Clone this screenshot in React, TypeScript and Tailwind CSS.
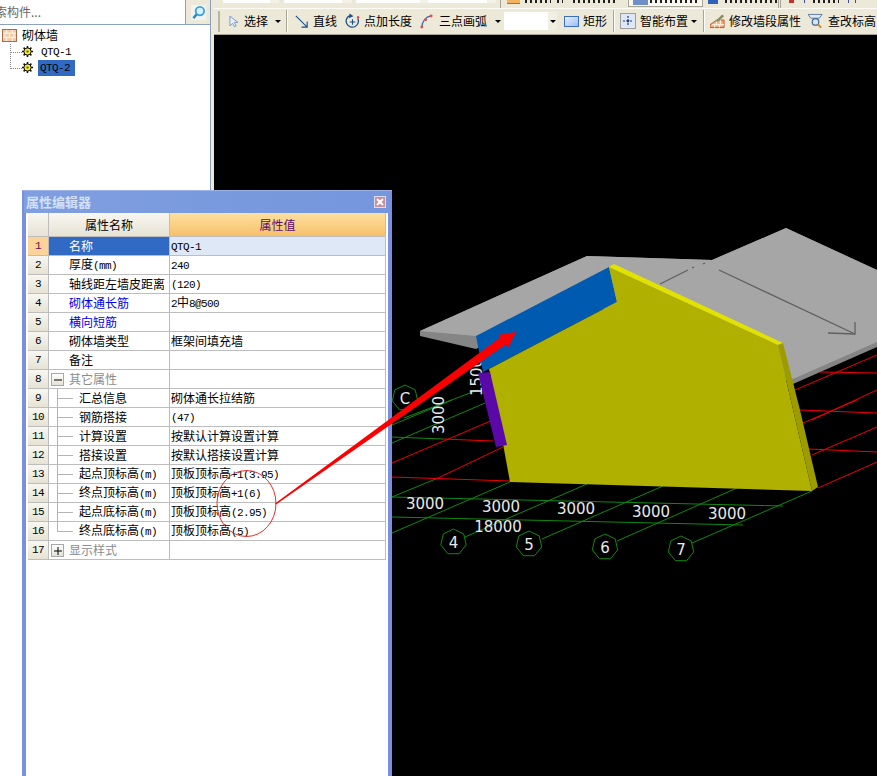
import { Fragment } from "react";

const cjk = '"Noto Sans CJK SC", sans-serif';

type Row = {
  no: number;
  name: string;
  value?: string;
  tone?: "blue" | "gray";
  indent?: boolean;
  toggle?: "-" | "+";
  last?: boolean;
};

const rows: Row[] = [
  { no: 1, name: "名称", value: "QTQ-1" },
  { no: 2, name: "厚度(mm)", value: "240" },
  { no: 3, name: "轴线距左墙皮距离", value: "(120)" },
  { no: 4, name: "砌体通长筋", value: "2中8@500", tone: "blue" },
  { no: 5, name: "横向短筋", tone: "blue" },
  { no: 6, name: "砌体墙类型", value: "框架间填充墙" },
  { no: 7, name: "备注" },
  { no: 8, name: "其它属性", tone: "gray", toggle: "-" },
  { no: 9, name: "汇总信息", value: "砌体通长拉结筋", indent: true },
  { no: 10, name: "钢筋搭接", value: "(47)", indent: true },
  { no: 11, name: "计算设置", value: "按默认计算设置计算", indent: true },
  { no: 12, name: "搭接设置", value: "按默认搭接设置计算", indent: true },
  { no: 13, name: "起点顶标高(m)", value: "顶板顶标高+1(3.95)", indent: true },
  { no: 14, name: "终点顶标高(m)", value: "顶板顶标高+1(6)", indent: true },
  { no: 15, name: "起点底标高(m)", value: "顶板顶标高(2.95)", indent: true },
  { no: 16, name: "终点底标高(m)", value: "顶板顶标高(5)", indent: true, last: true },
  { no: 17, name: "显示样式", tone: "gray", toggle: "+" },
];

// SimSun-like mix: latin runs are half width, han runs are 12px
function Mixed({ text }: { text: string }) {
  const parts = text.split(/([\u4e00-\u9fff]+)/).filter(Boolean);
  return (
    <span>
      {parts.map((p, i) =>
        /[\u4e00-\u9fff]/.test(p) ? (
          <span key={i} className="text-[12px] font-['Noto_Sans_CJK_SC']">
            {p}
          </span>
        ) : (
          <span key={i} className="text-[11px] tracking-[-0.6px] whitespace-pre font-['Liberation_Mono']">
            {p}
          </span>
        )
      )}
    </span>
  );
}

function BrickIcon({ className }: { className?: string }) {
  return (
    <svg viewBox="0 0 16 14" className={className}>
      <rect x="0.5" y="0.5" width="15" height="13" fill="#f6c9a4" stroke="#a9603a" />
      <path d="M1 4.5H15M1 9H15M5 1V4.5M11 1V4.5M3 4.5V9M8 4.5V9M13 4.5V9M5 9V13M11 9V13" stroke="#fff" fill="none" />
    </svg>
  );
}

function GearIcon() {
  return (
    <svg viewBox="0 0 11 11" className="w-[11px] h-[11px] shrink-0 -translate-y-[1px]">
      <path d="M5.5 0V11M0 5.5H11M1.6 1.6L9.4 9.4M9.4 1.6L1.6 9.4" stroke="#111" strokeWidth="1.6" />
      <circle cx="5.5" cy="5.5" r="3.6" fill="#f4ee20" stroke="#111" />
      <circle cx="5.5" cy="5.5" r="1.1" fill="#444" />
    </svg>
  );
}

function LeftPanel() {
  return (
    <div className="w-[211px] shrink-0 bg-white border-r border-[#8aa2bb] h-[776px] flex flex-col">
      <div className="h-[25px] flex border-b border-[#8aa2bb] bg-[#ece9d8]">
        <div className="w-[186px] h-[24px] bg-white border-r border-[#8aa2bb] overflow-hidden">
          <span className="block -ml-[17px] leading-[24px] text-[12px] text-[#666] whitespace-nowrap" style={{ fontFamily: cjk }}>
            搜索构件...
          </span>
        </div>
        <div className="flex-1 flex items-center justify-center">
          <svg viewBox="0 0 16 16" className="w-[15px] h-[15px]">
            <rect x="0" y="0" width="16" height="16" fill="#f2f4f4" />
            <circle cx="9.5" cy="6.5" r="4.5" fill="#d7f0fb" stroke="#3aa2df" strokeWidth="2" />
            <path d="M6 10L2.5 14" stroke="#2c86c8" strokeWidth="2.5" />
          </svg>
        </div>
      </div>
      <div className="pt-[2px]">
        <div className="flex items-center h-[16px] pl-[2px] gap-[5px]">
          <BrickIcon className="w-[15px] h-[13px] shrink-0" />
          <span className="text-[12px] text-black" style={{ fontFamily: cjk }}>
            砌体墙
          </span>
        </div>
        <div className="relative pl-[10px]">
          <div className="flex items-center h-[16px] mt-[1px]">
            <div className="w-[12px] border-t border-dotted border-[#888]" />
            <GearIcon />
            <span className="ml-[7px] text-[11px] tracking-[-0.6px] font-['Liberation_Mono'] px-[1px]">QTQ-1</span>
          </div>
          <div className="flex items-center h-[16px]">
            <div className="w-[12px] border-t border-dotted border-[#888]" />
            <GearIcon />
            <span className="ml-[5px] text-[11px] tracking-[-0.6px] font-['Liberation_Mono'] pl-[2px] w-[37px] h-[16px] leading-[16px] bg-[#316ac5] text-black">
              QTQ-2
            </span>
          </div>
          <div className="absolute left-[10px] top-0 h-[25px] border-l border-dotted border-[#888]" />
        </div>
      </div>
    </div>
  );
}

function Sep({ className }: { className?: string }) {
  return <div className={`w-[2px] h-[22px] bg-[#a8a596] border-r border-white shrink-0 ${className ?? ""}`} />;
}

function Caret({ className }: { className?: string }) {
  return <span className={`inline-block w-0 h-0 shrink-0 border-x-[3px] border-x-transparent border-t-[3px] border-t-black ${className ?? ""}`} />;
}

function Label({ children }: { children: string }) {
  return (
    <span className="shrink-0 text-[12px] text-black whitespace-nowrap" style={{ fontFamily: cjk }}>
      {children}
    </span>
  );
}

// bottoms of the captions of the row above, only a sliver of them is on screen
function Sliver({ className }: { className: string }) {
  return <div className={`h-[3px] shrink-0 bg-[repeating-linear-gradient(90deg,#222_0,#222_2px,transparent_2px,transparent_5px)] ${className}`} />;
}

function Toolbar() {
  return (
    <div className="h-[35px] bg-[#ece9d8] flex flex-col overflow-hidden border-b border-[#a8a596]">
      <div className="h-[9px] flex items-start shrink-0 border-b border-[#fbfaf4] relative">
        <div className="ml-[9px] w-[47px] h-[3px] bg-white" />
        <div className="w-[9px] h-[3px] bg-[#f4f2e6]" />
        <div className="ml-[5px] w-[58px] h-[3px] bg-white" />
        <div className="w-[10px] h-[3px] bg-[#f4f2e6]" />
        <div className="ml-[4px] w-[64px] h-[3px] bg-white" />
        <div className="w-[8px] h-[3px] bg-[#f4f2e6]" />
        <div className="ml-[0px] w-[59px] h-[3px] bg-white" />
        <div className="w-[9px] h-[3px] bg-[#f4f2e6]" />
        <div className="ml-[4px] w-[1px] h-[8px] bg-[#a8a596]" />
        <div className="ml-[6px] w-[13px] h-[4px] bg-[#f3b35e] border-b border-[#a8743a]" />
        <Sliver className="ml-[5px] w-[26px]" />
        <Sliver className="ml-[6px] w-[6px]" />
        <Sliver className="ml-[10px] w-[45px]" />
        <div className="ml-[10px] w-[75px] h-[7px] bg-[#f8f7f0] border-x border-b border-[#a8a596] flex items-start">
          <div className="ml-[4px] w-[15px] h-[5px] bg-[#6f8fc8]" />
          <Sliver className="ml-[2px] w-[50px]" />
        </div>
        <div className="ml-[5px] w-[10px] h-[4px] bg-[#2f62b8]" />
        <Sliver className="ml-[7px] w-[52px]" />
        <div className="ml-[1px] w-[3px] h-[8px] border-x border-[#a8a596]" />
        <div className="ml-[8px] w-[5px] h-[3px] bg-[#c8342a]" />
        <div className="ml-[10px] w-[1px] h-[3px] bg-[#3a4f9a]" />
        <Sliver className="ml-[8px] w-[26px]" />
        <div className="ml-[9px] w-[1px] h-[3px] bg-[#3a4f9a]" />
        <div className="ml-[6px] w-[1px] h-[3px] bg-[#3a4f9a]" />
      </div>
      <div className="h-[24px] flex items-center pl-[4px]">
        <div className="w-[2px] h-[21px] bg-[#b9b6a5]" />
        <svg viewBox="0 0 10 14" className="w-[9px] h-[13px] ml-[9px] mr-[6px] shrink-0">
          <path d="M1 1V12L4 9L6 13L8 12L6 8H10Z" fill="#e6eefb" stroke="#7b93c4" />
        </svg>
        <Label>选择</Label>
        <Caret className="ml-[7px]" />
        <Sep className="ml-[5px]" />
        <svg viewBox="0 0 16 16" className="w-[13px] h-[13px] ml-[7px] mr-[5px] shrink-0">
          <path d="M1 1L15 15M15 8V15H8" stroke="#1c4f8e" strokeWidth="1.4" fill="none" />
        </svg>
        <Label>直线</Label>
        <svg viewBox="0 0 16 16" className="w-[15px] h-[16px] ml-[8px] mr-[4px] shrink-0">
          <path d="M13.5 5A6.5 6.5 0 1 1 5 2.2" stroke="#1c4f8e" strokeWidth="1.4" fill="none" />
          <path d="M5 0L9 3L4 5Z" fill="#1c4f8e" />
          <path d="M8 6V12M5 9H11" stroke="#1c4f8e" strokeWidth="1.2" />
          <circle cx="14" cy="4" r="1.3" fill="#d9534f" />
        </svg>
        <Label>点加长度</Label>
        <svg viewBox="0 0 14 16" className="w-[13px] h-[15px] ml-[8px] mr-[6px] shrink-0">
          <path d="M2 14C2 8 6 3 12 2" stroke="#2a6fb8" strokeWidth="1.3" fill="none" />
          <circle cx="2" cy="14" r="1.6" fill="#d9534f" />
          <circle cx="6" cy="6" r="1.6" fill="#d9534f" />
          <circle cx="12" cy="2" r="1.6" fill="#d9534f" />
        </svg>
        <Label>三点画弧</Label>
        <Caret className="ml-[8px]" />
        <div className="w-[53px] h-[18px] ml-[3px] bg-white flex justify-end shrink-0">
          <div className="w-[9px] bg-[#f1efe2] flex items-center justify-center">
            <Caret />
          </div>
        </div>
        <div className="w-[15px] h-[11px] ml-[7px] mr-[4px] shrink-0 border border-[#3b6fc4] bg-linear-to-br from-[#e8f0fc] to-[#9dbcf0]" />
        <Label>矩形</Label>
        <Sep className="ml-[6px]" />
        <svg viewBox="0 0 16 16" className="w-[16px] h-[16px] ml-[5px] mr-[4px] shrink-0">
          <rect x="0.5" y="0.5" width="15" height="15" fill="#dfe7f5" stroke="#555" strokeDasharray="1 1" />
          <path d="M8 3V13M3 8H13" stroke="#1c3f7e" strokeWidth="1.2" strokeDasharray="2 1.5" />
          <circle cx="8" cy="8" r="1.4" fill="#1c3f7e" />
        </svg>
        <Label>智能布置</Label>
        <Caret className="ml-[3px]" />
        <Sep className="ml-[6px]" />
        <svg viewBox="0 0 16 16" className="w-[15px] h-[16px] ml-[5px] mr-[4px] shrink-0">
          <path d="M0 15H15V7L7 7L0 12Z" fill="#f3b07a" stroke="#b3562b" />
          <path d="M2 12H15M7 7V12M11 7V12M5 12V15M10 12V15" stroke="#fff" />
          <path d="M6 8L13 1L15 3L8 9Z" fill="#8a8a60" />
        </svg>
        <Label>修改墙段属性</Label>
        <svg viewBox="0 0 16 16" className="w-[15px] h-[16px] ml-[7px] mr-[5px] shrink-0">
          <path d="M0 1H15L12 5H3Z" fill="#dfe9f7" stroke="#5a7aa8" />
          <circle cx="8" cy="9" r="3.5" fill="#cfe6f7" stroke="#4a6a94" strokeWidth="1.3" />
          <path d="M10.5 11.5L14 15" stroke="#c98a2e" strokeWidth="2" />
        </svg>
        <Label>查改标高</Label>
      </div>
    </div>
  );
}

// page coords for the 3D view, the svg starts at x=214 y=35 via viewBox
const greenLines = [
  "392,497 783,506",
  "392,517 743,525",
  "465,537 587,484",
  "542,539 663,486",
  "617,541 737,488",
  "692,543 812,491",
  "392,533 510,482",
  "392,497 438,478",
  "392,443 485,403",
  "392,425 452,400",
  "404,418 478,390",
  "392,437 443,439",
];
const redLines = [
  "392,463 493,420",
  "438,478 503,447",
  "392,477 510,481",
  "443,439 493,441",
  "800,410 877,413",
  "803,423 857,400",
  "809,449 877,452",
  "812,455 877,427",
  "818,488 877,462",
  "795,390 877,355",
  "812,420 877,390",
  "820,372 877,373",
];
const dims = [
  { x: 425, y: 509, t: "3000" },
  { x: 501, y: 512, t: "3000" },
  { x: 576, y: 514, t: "3000" },
  { x: 651, y: 517, t: "3000" },
  { x: 727, y: 519, t: "3000" },
  { x: 498, y: 532, t: "18000" },
];
const axes = [
  { x: 453.5, y: 542, t: "4" },
  { x: 529, y: 544, t: "5" },
  { x: 605, y: 547, t: "6" },
  { x: 681, y: 549, t: "7" },
];

function heptagon(cx: number, cy: number, r: number) {
  return Array.from({ length: 7 }, (_, i) => {
    const a = (i * 2 * Math.PI) / 7 - Math.PI / 2;
    return `${(cx + r * Math.cos(a)).toFixed(1)},${(cy + r * Math.sin(a)).toFixed(1)}`;
  }).join(" ");
}

function ModelView() {
  const font = { fontFamily: '"DejaVu Sans", sans-serif' };
  return (
    <svg viewBox="214 35 663 741" className="w-[663px] h-[741px] block bg-black">
      {greenLines.map((p) => (
        <polyline key={p} points={p} fill="none" stroke="#0f8a0f" />
      ))}
      {redLines.map((p) => (
        <polyline key={p} points={p} fill="none" stroke="#f00000" />
      ))}
      {/* slab */}
      <polygon points="420,331 587,256 712,260 786,228 877,270 877,347 793,384 700,330 560,300 476,349 420,336" fill="#858585" />
      <polygon points="420,331 587,256 712,260 786,228 877,270 877,342 793,379 700,330 560,300 476,336" fill="#a6a6a6" />
      <polyline points="660,284 688,270" stroke="#606060" strokeWidth="1.3" fill="none" />
      <polyline points="692,268 694,267" stroke="#606060" strokeWidth="1.3" fill="none" />
      <polyline points="703,264 705,263" stroke="#606060" strokeWidth="1.3" fill="none" />
      <polyline points="719,270 855,334 855,322" stroke="#606060" strokeWidth="1.3" fill="none" />
      <polyline points="828,333 855,334" stroke="#606060" strokeWidth="1.3" fill="none" />
      <text transform="translate(482 377) rotate(-90)" textAnchor="middle" fontSize="15" fill="#e8e8e8" style={font}>
        1500
      </text>
      {/* wall */}
      <polygon points="476,336 609,267 617,302 483,372" fill="#005bb0" />
      <polygon points="490,373 489,369 617,302 609,267 778,345 812,491 510,482" fill="#b0b000" />
      <polygon points="609,267 614,264 783,343 778,345" fill="#e2e200" />
      <polygon points="778,345 783,343 800,410 818,487 812,491" fill="#9c9c00" />
      <polygon points="478,373 490,372 507,445 496,447" fill="#5a08a8" />
      {dims.map((d) => (
        <text key={d.x} x={d.x} y={d.y} textAnchor="middle" fontSize="15" fill="#e8e8e8" style={font}>
          {d.t}
        </text>
      ))}
      <text transform="translate(444 415) rotate(-90)" textAnchor="middle" fontSize="15" fill="#e8e8e8" style={font}>
        3000
      </text>
      <polygon points={heptagon(405, 398, 13)} fill="#000" stroke="#0f8a0f" />
      <text x={405} y={404} textAnchor="middle" fontSize="15" fill="#e8e8e8" style={font}>
        C
      </text>
      {axes.map((a) => (
        <Fragment key={a.t}>
          <polygon points={heptagon(a.x, a.y, 13)} fill="#000" stroke="#0f8a0f" />
          <text x={a.x} y={a.y + 6} textAnchor="middle" fontSize="15" fill="#e8e8e8" style={font}>
            {a.t}
          </text>
        </Fragment>
      ))}
    </svg>
  );
}

function PropertyEditor() {
  return (
    <div className="absolute left-[22px] top-[190px] w-[370px] h-[586px] bg-[#7a8fe0] px-[4px] border-t border-[#9db0e8]">
      <div className="h-[22px] flex items-center justify-between bg-linear-to-r from-[#7f9fe0] to-[#7595dd] -mx-[2px] pl-[2px] pr-[3px]">
        <span className="text-[13px] font-bold text-[#d3e0f6]" style={{ fontFamily: cjk }}>
          属性编辑器
        </span>
        <div className="w-[12px] h-[12px] bg-[#c98f9c] border border-[#dcdcec] flex items-center justify-center mr-[1px]">
          <svg viewBox="0 0 8 8" className="w-[8px] h-[8px]">
            <path d="M1 1L7 7M7 1L1 7" stroke="#fff" strokeWidth="2" />
          </svg>
        </div>
      </div>
      <div className="bg-white h-[564px] pl-[2px] pr-[2px]">
        <div className="grid grid-cols-[21px_121px_216px] w-[358px]" style={{ fontFamily: cjk }}>
          <div className="h-[24px] bg-linear-to-b from-[#f8f7f1] to-[#e6e3d4] border-b border-r border-[#bdbdbd]" />
          <div className="h-[24px] bg-linear-to-b from-[#f8f7f1] to-[#e6e3d4] border-b border-r border-[#bdbdbd] flex items-center justify-center text-[12px] text-black">
            属性名称
          </div>
          <div className="h-[24px] bg-linear-to-b from-[#fde0a0] to-[#f7c068] border-b border-r border-[#bdbdbd] flex items-center justify-center text-[12px] text-[#5a0a6e]">
            属性值
          </div>
          {rows.map((r) => (
            <Fragment key={r.no}>
              <div
                className={`h-[19px] border-b border-r border-[#bdbdbd] flex items-center justify-center text-[11px] tracking-[-0.6px] font-['Liberation_Mono'] ${
                  r.no === 1 ? "bg-[#fcd49a] text-[#6a0a4e]" : "bg-linear-to-b from-[#f8f7f1] to-[#e6e3d4] text-black"
                }`}
              >
                {r.no}
              </div>
              <div
                className={`relative h-[19px] pb-[4px] border-b border-r border-[#bdbdbd] flex items-center leading-none whitespace-nowrap ${
                  r.no === 1
                    ? "bg-[#316ac5] text-white"
                    : r.tone === "blue"
                      ? "text-[#0000f0]"
                      : r.tone === "gray"
                        ? "text-[#8c8c8c]"
                        : "text-black"
                } ${r.indent ? "pl-[30px]" : "pl-[20px]"}`}
              >
                {r.toggle && (
                  <span className="absolute left-[2px] top-[3px] w-[13px] h-[13px] border border-[#a8a8a8] bg-linear-to-b from-white to-[#e4e2d6] flex items-center justify-center">
                    <svg viewBox="0 0 8 8" className="w-[8px] h-[8px]">
                      <path d={r.toggle === "-" ? "M0 4H8" : "M0 4H8M4 0V8"} stroke="#000" />
                    </svg>
                  </span>
                )}
                {r.indent && (
                  <>
                    <span className={`absolute left-[8px] top-0 border-l border-[#b4b4b4] ${r.last ? "h-[10px]" : "h-[19px]"}`} />
                    <span className="absolute left-[8px] top-[9px] w-[16px] border-t border-[#b4b4b4]" />
                  </>
                )}
                <Mixed text={r.name} />
              </div>
              <div
                className={`h-[19px] pb-[4px] border-b border-r border-[#bdbdbd] flex items-center pl-[1px] leading-none whitespace-nowrap text-black ${
                  r.no === 1 ? "bg-[#dfe8f6]" : ""
                }`}
              >
                {r.value && <Mixed text={r.value} />}
              </div>
            </Fragment>
          ))}
        </div>
      </div>
    </div>
  );
}

function Annotation() {
  return (
    <svg viewBox="0 0 877 776" className="absolute left-0 top-0 w-[877px] h-[776px] pointer-events-none">
      <ellipse cx="246.5" cy="503.5" rx="29.5" ry="33" fill="none" stroke="#e8302a" />
      <polygon points="275,503.5 276,504.5 505,345 501,337" fill="#fa0000" />
      <polygon points="516,332 498,335 508,348" fill="#fa0000" />
    </svg>
  );
}

export default function App() {
  return (
    <div className="relative w-[877px] h-[776px] overflow-hidden flex bg-white">
      <LeftPanel />
      <div className="w-[3px] shrink-0 bg-[#ece9d8]" />
      <div className="flex-1 flex flex-col min-w-0">
        <Toolbar />
        <ModelView />
      </div>
      <PropertyEditor />
      <Annotation />
    </div>
  );
}
